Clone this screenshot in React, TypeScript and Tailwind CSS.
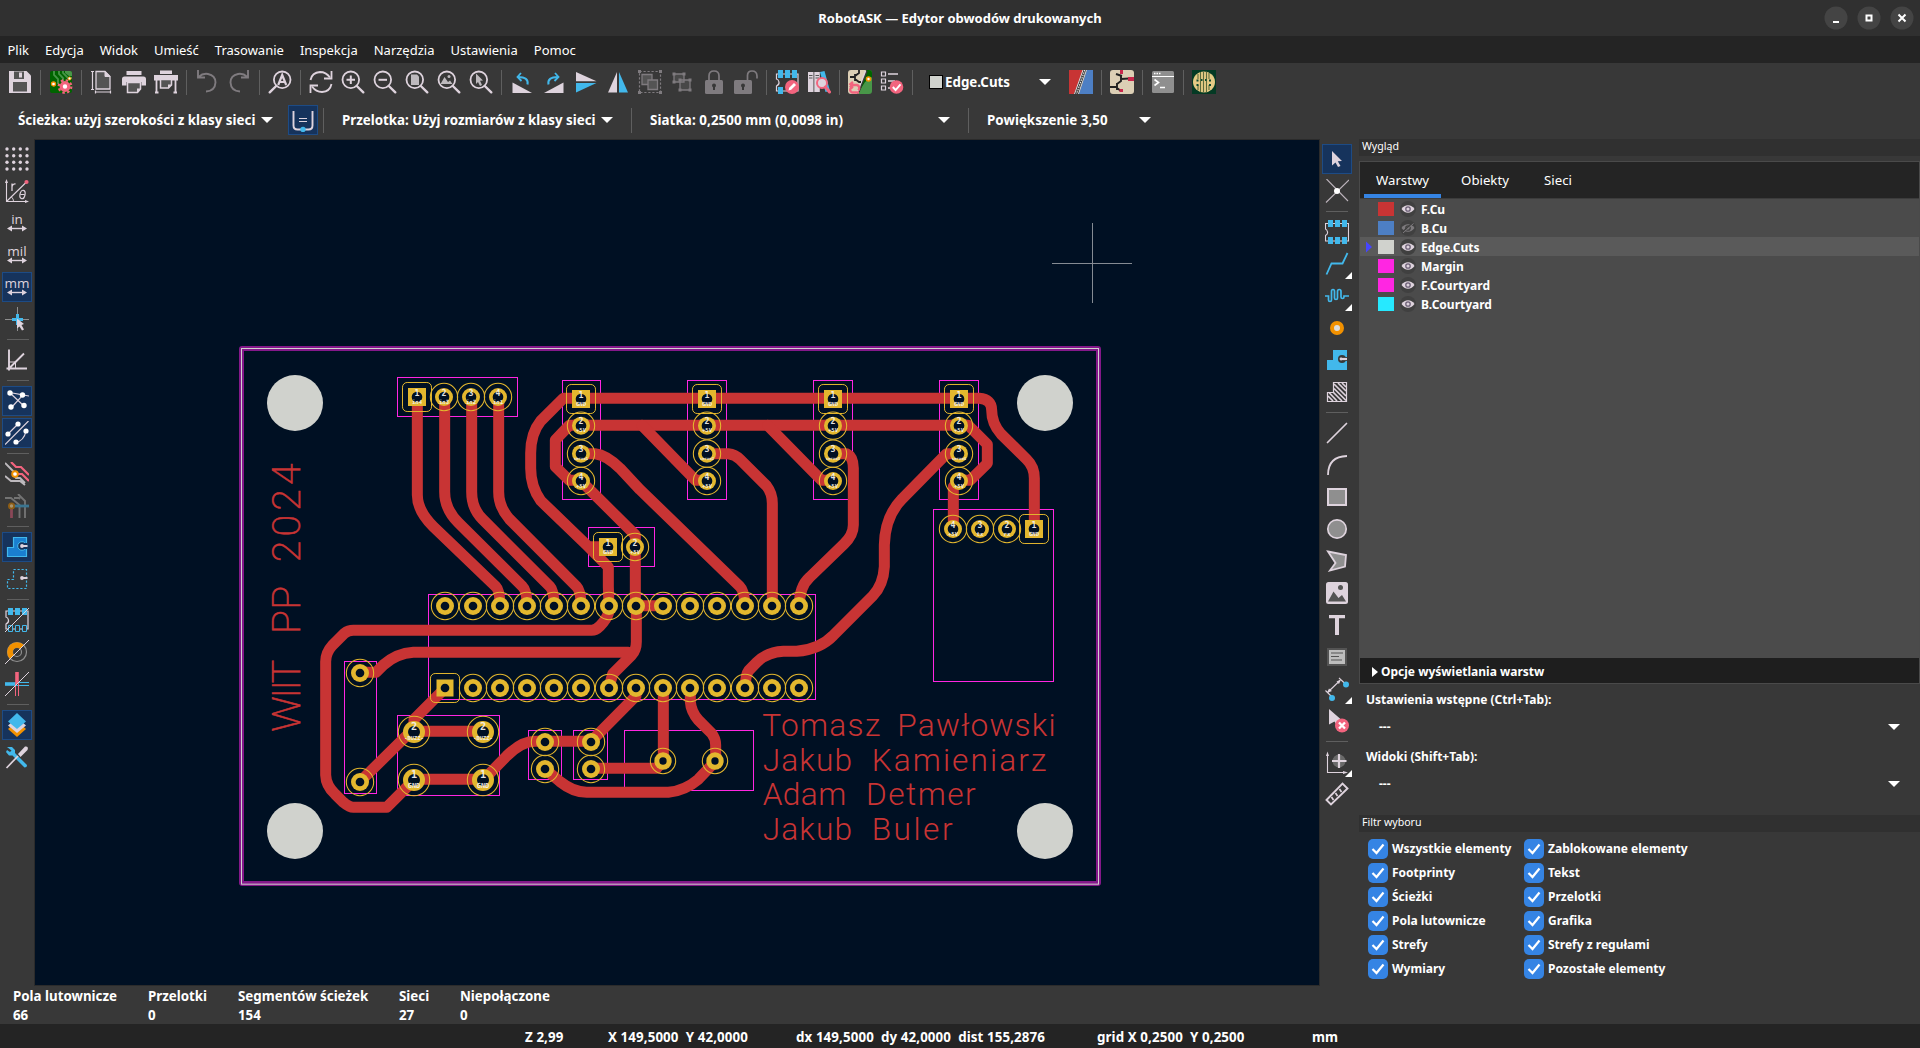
import React from 'react';

type Kids = { children?: React.ReactNode };

const L = '#ded3dd';
const B = '#42b8eb';
const P = '#f2647e';
const O = '#f29100';
const G = '#7f7b7f';

function Icon({ children }: Kids) {
  return (
    <svg viewBox="0 0 24 24" className="h-6 w-6 shrink-0" fill="none">
      {children}
    </svg>
  );
}

/* ---------- top toolbar icons ---------- */

const Lens = ({ children, flip }: Kids & { flip?: boolean }) => (
  <Icon>
    <g transform={flip ? 'matrix(-1 0 0 1 24 0)' : undefined}>
      <circle cx="9.8" cy="9.8" r="8.3" stroke={L} strokeWidth="1.8" />
      <path d="M15.8 16L22.3 22.3" stroke={L} strokeWidth="2.4" strokeLinecap="round" />
    </g>
    {children}
  </Icon>
);

const Save = () => (
  <Icon>
    <path d="M1 1H18.5L23 5.500V23H1Z" fill={L} />
    <path d="M6 1.500H16V9H6Z" fill="#545454" />
    <path d="M11 2.500H14V7.500H11Z" fill={L} />
    <path d="M5 12H19V21.500H5Z" fill="#545454" />
  </Icon>
);
const BoardSetup = () => (
  <Icon>
    <rect x="1" y="1" width="22" height="22" rx="2" fill="#006400" />
    <path d="M5 1L5 5L9 9V14M10 1V4L14 8V12M14 1V3L19 8H23" stroke="#489648" strokeWidth="1.8" />
    <path d="M16 1H21Q23 1 23 3V6H20L16 3Z" fill="#489648" />
    <circle cx="4.500" cy="14" r="2" fill="#fff" stroke={O} strokeWidth="1.300" />
    <circle cx="20.500" cy="8.500" r="1.500" fill="#fff" stroke={O} />
    <circle cx="16" cy="16.500" r="6.300" fill="none" stroke={P} strokeWidth="2.200" strokeDasharray="2.470 2.470" />
    <circle cx="16" cy="16.500" r="3.800" fill="#fff" stroke={P} strokeWidth="3.200" />
  </Icon>
);
const PageIcon = () => (
  <Icon>
    <path d="M6 1.500H15L20 6.500V19H6Z" fill="#545454" stroke={L} strokeWidth="1.300" />
    <path d="M15 1.500V6.500H20Z" fill={L} stroke={L} />
    <path d="M2.500 1V20M1 1.500H4M1 19.500H4M5 22H21M5.500 20.500V23.500M20.500 20.500V23.500" stroke={L} strokeWidth="1.200" />
  </Icon>
);
const Print = () => (
  <Icon>
    <path d="M4.500 1H19.500V5H4.500Z" fill={L} />
    <path d="M2.500 6.500H21.500Q24 6.500 24 9V15.500H19.500V12H4.500V15.500H0V9Q0 6.500 2.500 6.500Z" fill={L} />
    <path d="M5.500 12.500H18.500V19L15.500 22.500H5.500Z" fill="#545454" stroke={L} strokeWidth="1.500" />
    <path d="M15 23V18.500H19Z" fill={L} />
  </Icon>
);
const Plot = () => (
  <Icon>
    <path d="M6 .500H18V4H6Z" fill={L} />
    <path d="M0 5H24V10.500H0Z" fill={L} />
    <path d="M2.500 10V22M21.500 10V22M1 22.500H4.500M19.500 22.500H23" stroke={L} strokeWidth="1.800" />
    <path d="M6.500 9.500H17.500V15L14.500 18H6.500Z" fill="#545454" stroke={L} strokeWidth="1.500" />
    <path d="M14 18.500V14.500H18Z" fill={L} />
  </Icon>
);
const Undo = () => (
  <Icon>
    <path d="M3 0V7.500H10M3.500 7Q8 3 13 4Q20.500 5.500 20.500 12.500Q20 21 11 21.500" stroke={G} strokeWidth="1.900" />
  </Icon>
);
const Redo = () => (
  <Icon>
    <path d="M21 0V7.500H14M20.500 7Q16 3 11 4Q3.500 5.500 3.500 12.500Q4 21 13 21.500" stroke={G} strokeWidth="1.900" />
  </Icon>
);
const Refresh = () => (
  <Icon>
    <path d="M1.500 10Q3 2.500 11 2Q17 2 21 7.500M22.500 14Q21 21.500 13 22Q7 22 3 16.500" stroke={L} strokeWidth="1.800" />
    <path d="M22.500 1V8.500H15M1.500 23V15.500H9" stroke={L} strokeWidth="1.800" />
  </Icon>
);
const RotL = () => (
  <Icon>
    <path d="M2.500 12.500L22 23H2.500Z" fill={L} />
    <path d="M17.500 14.500Q19 7 8 7" stroke={B} strokeWidth="2" />
    <path d="M11 3L7.500 7L11.500 11" stroke={B} strokeWidth="1.800" />
  </Icon>
);
const RotR = () => (
  <Icon>
    <path d="M21.500 12.500L2 23H21.500Z" fill={L} />
    <path d="M6.500 14.500Q5 7 16 7" stroke={B} strokeWidth="2" />
    <path d="M13 3L16.500 7L12.500 11" stroke={B} strokeWidth="1.800" />
  </Icon>
);
const FlipV = () => (
  <Icon>
    <path d="M2 2L22.500 11.300H2Z" fill={L} />
    <path d="M2 22.500V13L22.500 13Z" fill={B} />
  </Icon>
);
const FlipH = () => (
  <Icon>
    <path d="M11 2V22.500H2Z" fill={L} />
    <path d="M13 2V22.500H22Z" fill={B} />
  </Icon>
);
const Group = () => (
  <Icon>
    <path d="M1.500 1.500H22.500V22.500H1.500Z" stroke={G} strokeWidth="1.200" strokeDasharray="2.200 1.800" />
    <path d="M0 0H3V3H0ZM21 0H24V3H21ZM0 21H3V24H0ZM21 21H24V24H21Z" fill={G} />
    <path d="M4 4.500H14V14.500H4Z" fill="#545454" stroke={G} strokeWidth="1.300" />
    <path d="M10 10H19.500V19.500H10Z" fill="#545454" stroke={G} strokeWidth="1.300" />
  </Icon>
);
const Ungroup = () => (
  <Icon>
    <path d="M4 4H14V12H4ZM10 10H20V20H10Z" fill="#484848" stroke={G} strokeWidth="1.300" />
    <path d="M2.500 2.500H5.500V5.500H2.500ZM12.500 2.500H15.500V5.500H12.500ZM2.500 10.500H5.500V13.500H2.500ZM8.500 8.500H11.500V11.500H8.500ZM18.500 8.500H21.500V11.500H18.500ZM8.500 18.500H11.500V21.500H8.500ZM18.500 18.500H21.500V21.500H18.500Z" fill={G} />
  </Icon>
);
const Lock = ({ open }: { open?: boolean }) => (
  <Icon>
    {open ? (
      <path d="M13.500 11V5.500Q13.500 1 18 1Q22.800 1 23 6V8.500" stroke={G} strokeWidth="1.700" />
    ) : (
      <path d="M7 11V6Q7 1 12 1Q17 1 17 6V11" stroke={G} strokeWidth="1.700" />
    )}
    <rect x={open ? 0 : 3} y="10" width="18" height="14" rx="1.500" fill={G} />
    <path d={open ? 'M9 14V20' : 'M12 14V20'} stroke="#383838" strokeWidth="2" />
    <circle cx={open ? 9 : 12} cy="15.500" r="2" fill="#383838" />
  </Icon>
);
const FootEd = () => (
  <Icon>
    <path d="M1.500 4H23V21H1.500V16Q4.500 14.500 4 12Q3.500 9.500 1.500 9Z" stroke={L} strokeWidth="1.200" />
    <path d="M3 0H8V8H3ZM10 0H15V8H10ZM17 0H22V8H17ZM3 17H8V24H3Z" fill={B} />
    <circle cx="17" cy="17" r="7" fill={P} />
    <path d="M13.500 20.500L14.200 17.800L19 13L21 15L16.200 19.800Z" fill="#fff" />
  </Icon>
);
const Library = () => (
  <Icon>
    <path d="M1 2H6.500V22H1ZM7.300 2H12.800V22H7.300Z" fill={L} />
    <path d="M13 2L17.500 1L23 21L18.500 22Z" fill={B} />
    <path d="M2 5.500H5.500M2 8H5.500M8.500 5.500H12M8.500 8H12" stroke="#545454" />
    <circle cx="15" cy="13" r="5" fill={L} stroke={P} strokeWidth="2" />
    <path d="M18.500 17L22.500 22" stroke={P} strokeWidth="3" strokeLinecap="round" />
  </Icon>
);
const UpdatePcb = () => (
  <Icon>
    <path d="M3 0H18L9 24H3Q0 24 0 21V3Q0 0 3 0Z" fill="#dccfb5" />
    <path d="M19 0H21Q24 0 24 3V21Q24 24 21 24H10Z" fill="#489648" />
    <path d="M19 0H21Q24 0 24 3V7L17 12L12 20H11Z" fill="#006400" />
    <path d="M19 1L11 22" stroke="#383838" strokeWidth="1.300" />
    <path d="M17.500 1L9 23" stroke={L} strokeWidth="1.500" />
    <path d="M2 7H7M7 4V11M7 6L11 3V0M7 9L11 12H13" stroke="#222" strokeWidth="1.800" />
    <circle cx="20.500" cy="9" r="2" fill="#fff" stroke={O} strokeWidth="1.600" />
    <path d="M1.500 15H9Q12.500 16 10.500 20.500M1.500 15L5 12M1.500 15L5 18M11 22.500L4 22.500Q1 21 3 17.500" stroke={P} strokeWidth="2.400" />
  </Icon>
);
const Drc = () => (
  <Icon>
    <path d="M1.500 2H5.500V6H1.500ZM1.500 9H5.500V13H1.500ZM1.500 16H5.500V20H1.500Z" stroke={L} strokeWidth="1.200" />
    <path d="M8 4H18M8 11H15M8 18H10" stroke={L} strokeWidth="1.500" />
    <circle cx="16.500" cy="17" r="6.800" fill={P} />
    <path d="M12.800 17L15.600 20L20.500 14.300" stroke="#fff" strokeWidth="1.900" />
  </Icon>
);
const LayerPair = () => (
  <Icon>
    <path d="M0 0H14L5 24H0Z" fill="#c83434" />
    <path d="M18 0H24V24H10Z" fill="#4d7fc4" />
    <path d="M14 0L5.500 24M17.500 0L9.500 24" stroke="#eee" strokeWidth=".900" />
    <path d="M15.800 0L7.500 24" stroke="#eee" strokeWidth="1.100" strokeDasharray="1.500 1" />
  </Icon>
);
const Schematic = () => (
  <Icon>
    <rect width="24" height="24" rx="3" fill="#dccfb5" />
    <path d="M0 17H7M7 13V20M7 14L11 11V5M7 18L11 21M6 4L12 6M11 9L19 8.500" stroke="#222" strokeWidth="1.900" />
    <path d="M10 0H13V4H10ZM18 7H24V11H18ZM9.500 19H13V22H9.500Z" fill="#c8284c" />
  </Icon>
);
const Terminal = () => (
  <Icon>
    <rect x="1" y="1" width="22" height="22" rx="1.500" fill="#8f8f8f" />
    <path d="M1 6.500H23" stroke="#fff" />
    <path d="M3 3.500H4.500M5.500 3.500H7M8 3.500H9.500" stroke="#fff" strokeWidth="1.500" />
    <path d="M3.500 9.500L7.500 12.500L3.500 15.500M9 17.500H14" stroke="#fff" strokeWidth="1.600" />
  </Icon>
);
const Chip = () => (
  <Icon>
    <rect width="24" height="24" fill="#043a24" />
    <ellipse cx="12" cy="12" rx="11" ry="10.500" fill="#e5cb85" />
    <path d="M8.500 2V22M11.500 1.500V22.500M14.500 1.500V22.500M17 3V9M6 4V9M6 15V20M17 15V20" stroke="#5b6b3c" strokeWidth="1.100" />
    <path d="M4.500 9.500H6.500V11.500H4.500ZM4.500 14H6.500V16H4.500ZM17 9.500H19V11.500H17ZM17 14H19V16H17ZM9 9H10.500V11H9ZM13 9H14.500V11H13Z" fill="#0d4a30" />
  </Icon>
);

/* ---------- left toolbar icons ---------- */

const GridDots = () => (
  <Icon>
    {[2, 8.700, 15.300, 22].map((y) =>
      [2, 8.700, 15.300, 22].map((x) => <circle key={`${x}-${y}`} cx={x} cy={y} r="1.700" fill={L} />)
    )}
  </Icon>
);
const Polar = () => (
  <Icon>
    <path d="M1.500 2V22.500H22M1.500 22.500L21 3.500" stroke={L} strokeWidth="1.100" />
    <path d="M1.500 0L3 4H0ZM24 22.500L20 21V24Z" fill={L} />
    <circle cx="21.500" cy="3" r="2.100" fill={P} />
    <path d="M6.500 18Q8.500 20 8.500 22" stroke={L} strokeWidth=".900" />
    <path d="M7 4.500V12M7 7.500Q8 4.500 10.500 5" stroke={L} strokeWidth="1.300" />
    <ellipse cx="17.500" cy="15.500" rx="2.500" ry="4.300" transform="rotate(12 17.500 15.500)" stroke={L} strokeWidth="1.200" />
    <path d="M15.300 15.500H19.700" stroke={L} />
  </Icon>
);
const Unit = ({ label }: { label: string }) => (
  <div className="flex h-6 w-6 flex-col items-center">
    <span className="h-[14px] font-['Open_Sans'] text-[13.500px] leading-[16px] font-medium text-[#ded3dd]">{label}</span>
    <svg viewBox="0 0 24 7" className="h-[7px] w-6 shrink-0">
      <path d="M2 3.500L7 .500V6.500ZM22 3.500L17 .500V6.500Z" fill={L} />
      <path d="M5 3.500H19" stroke={L} strokeWidth="1.400" />
    </svg>
  </div>
);
const CursorCross = () => (
  <Icon>
    <path d="M0 12.500H24M12.500 0V24" stroke="#8f8f8f" strokeWidth="1" />
    <path d="M11 7H14V11H18V14H14V18H11V14H7V11H11Z" fill={B} />
    <path d="M12 11.500L19 17L16.500 18L19 22.500L17 23.500L14.500 19.500L12 21.500Z" fill={L} />
  </Icon>
);
const Angle = () => (
  <Icon>
    <path d="M4 1.500V22.500M1.500 20.500H22M4 20.500L19 5.500" stroke={L} strokeWidth="1.900" />
    <path d="M4 14H10.500V20" stroke={L} />
  </Icon>
);
const Ratsnest = () => (
  <Icon>
    <path d="M4.500 3.500L18 6L6 19M4.500 3.500L19 17M18 6L24 7" stroke={L} strokeWidth="1.200" />
    <g fill="#fff">
      <circle cx="5" cy="4" r="2.700" />
      <circle cx="17.500" cy="6" r="2.700" />
      <circle cx="6" cy="18" r="2.700" />
      <circle cx="19" cy="16.500" r="2.700" />
    </g>
  </Icon>
);
const CurvedRats = () => (
  <Icon>
    <path d="M0 23.500L23.500 0M3 13L13 3M10.500 21.500Q19 20 21 10" stroke={L} strokeWidth="1.200" />
    <g fill="#fff">
      <circle cx="3" cy="13" r="2.600" />
      <circle cx="13" cy="3" r="2.600" />
      <circle cx="11" cy="21" r="2.600" />
      <circle cx="21" cy="10" r="2.600" />
    </g>
  </Icon>
);
const HighCurrent = () => (
  <Icon>
    <path d="M0 1L8 9V12L11 16H15L20 21M0 14L6 19H15L20 23" stroke="#bdb9bd" strokeWidth="1.900" />
    <path d="M6 0L11 5H16L24 13M13 12H17L24 19" stroke={P} strokeWidth="2.200" />
    <circle cx="10" cy="12" r="2.800" fill="#fff" stroke={O} strokeWidth="1.900" />
  </Icon>
);
const DimNets = () => (
  <Icon>
    <path d="M0 4H6L14.500 11V24M9 4H14L15 5M13 0L20 7V24" stroke="#737373" strokeWidth="1.900" />
    <path d="M6.500 12V24" stroke="#8a4857" strokeWidth="2.800" />
    <path d="M7 12H24" stroke="#3b7590" strokeWidth="2.800" />
    <circle cx="6.500" cy="12" r="2.600" fill="#a9956f" stroke="#8e5d14" strokeWidth="1.800" />
  </Icon>
);
const ZoneSolid = ({ outline }: { outline?: boolean }) => (
  <Icon>
    {outline ? (
      <path d="M8.500 2.500H21.500V21.500H2.500V12.500H8.500Z" stroke={B} strokeWidth="1.200" strokeDasharray="2.200 1.800" />
    ) : (
      <path d="M8.500 2.500H21.500V21.500H2.500V12.500H8.500Z" fill="#1a7fd0" stroke={B} strokeWidth="1.200" />
    )}
    {!outline && <circle cx="17" cy="11" r="4.300" fill="#16335c" stroke={B} />}
    {!outline && <path d="M17 8H22V14H17Z" fill="#16335c" />}
    <circle cx="17" cy="11" r="1.900" fill={L} />
    <path d="M17 11H22.500" stroke={L} strokeWidth="2" />
  </Icon>
);
const PadSketch = () => (
  <Icon>
    <path d="M1 3H23V21H1V16Q4 14.500 3.500 12Q3 9.500 1 9Z" stroke={L} strokeWidth="1.200" />
    <path d="M3 0H8V7H3ZM10 0H15V7H10ZM17 0H22V7H17Z" fill={B} />
    <path d="M3.500 17.500H7.500V23.500H3.500ZM10.500 17.500H14.500V23.500H10.500ZM17.500 17.500H21.500V23.500H17.500Z" fill="#383838" stroke={B} />
    <path d="M0 24L24 0" stroke={L} />
  </Icon>
);
const ViaSketch = () => (
  <Icon>
    <circle cx="12" cy="12" r="9.500" stroke="#8f8f8f" strokeWidth="1.200" />
    <circle cx="12" cy="12" r="4.500" stroke="#8f8f8f" strokeWidth="1.200" />
    <path d="M5 19A9.900 9.900 0 0 1 19 5L15 9A4.200 4.200 0 0 0 9 15Z" fill={O} />
    <path d="M0 24L24 0" stroke={L} />
  </Icon>
);
const TrackSketch = () => (
  <Icon>
    <path d="M0 12H12" stroke={B} strokeWidth="3.600" />
    <path d="M12 10.500H24M12 13.500H24" stroke={B} />
    <path d="M12 0V12" stroke={P} strokeWidth="3.600" />
    <path d="M10.500 12V24M13.500 12V24" stroke={P} />
    <path d="M0 24L24 0" stroke={L} />
  </Icon>
);
const Layers = () => (
  <Icon>
    <path d="M12 8L21 16L12 24L3 16Z" fill={O} />
    <path d="M12 4.500L21 12.500L12 20L3 12.500Z" fill={L} />
    <path d="M12 0L21 8.500L12 16L3 8.500Z" fill={B} />
  </Icon>
);
const Tools = () => (
  <Icon>
    <path d="M2 2L7 2L10 5V8L22 20Q22 22.500 19.500 22.500L7.500 10.500H4L1 7L2 5L5 7L6.500 5.500Z" fill={B} />
    <path d="M1.500 23L13 11" stroke={L} strokeWidth="1.700" />
    <path d="M13 9L20 1.500Q24 1 22.500 5L15.500 12Z" fill={L} />
  </Icon>
);

/* ---------- right toolbar icons ---------- */

const Arrow = () => (
  <Icon>
    <path d="M7 4L17 14L12.800 14.300L15.500 19L13 20L10.500 15.500L7 18.500Z" fill={L} />
  </Icon>
);
const LocalRats = () => (
  <Icon>
    <path d="M1.500 0L23 22M24 1L1 23.500" stroke="#bdb4bc" strokeWidth="1.100" />
    <circle cx="12" cy="12" r="3" fill="#fff" />
  </Icon>
);
const Footprint = () => (
  <Icon>
    <path d="M.500 3.500H23.500V21H.500V15.500Q3 14 2.500 12Q2 9.500 .500 9Z" stroke={L} strokeWidth="1.100" />
    <path d="M3 0H8V7H3ZM10 0H15V7H10ZM17 0H22V7H17ZM3 17H8V24H3ZM10 17H15V24H10ZM17 17H22V24H17Z" fill={B} />
  </Icon>
);
const Route = () => (
  <Icon>
    <path d="M1.500 22.500L6.500 11.500H17.500L22.500 1" stroke={B} strokeWidth="1.800" />
  </Icon>
);
const Tune = () => (
  <Icon>
    <path d="M0 12H3.500V16Q3.500 17.500 5 17.500Q6.500 17.500 6.500 16V7.500Q6.500 5.500 8 5.500Q9.500 5.500 9.500 7.500V14Q9.500 15.500 11 15.500Q12.500 15.500 12.500 14V7.500Q12.500 5.500 14.300 5.500Q16 5.500 16 7.500V13Q16 14.500 17.500 14.500Q19 14.500 19 13V12H24" stroke={B} strokeWidth="1.700" />
  </Icon>
);
const Via = () => (
  <Icon>
    <circle cx="12" cy="12" r="5" fill="#dedede" stroke={O} strokeWidth="4" />
  </Icon>
);
const ZoneAdd = () => (
  <Icon>
    <path d="M8 2H22V22H2V12H8Z" fill={B} />
    <circle cx="17" cy="11" r="4" fill="#383838" />
    <path d="M18 9H22.500V13H18Z" fill="#383838" />
    <path d="M16 11H22" stroke={L} strokeWidth="2.200" />
    <circle cx="16" cy="11" r="1.400" fill={L} />
  </Icon>
);
const RuleArea = () => (
  <Icon>
    <path d="M8.500 2.500H21.500V21.500H2.500V12.500H8.500Z" stroke={L} strokeWidth="1.200" />
    <path d="M9 4L21 16M13 3L21 11M17 3L21 7M9 8.500L21 20.500M8 12L17 21M4 12.500L12 21M3 16L8 21" stroke={L} strokeWidth="1.700" />
  </Icon>
);
const LineIcon = () => (
  <Icon>
    <path d="M2.500 21.500L21.500 2.500" stroke={L} strokeWidth="1.700" strokeLinecap="round" />
  </Icon>
);
const ArcIcon = () => (
  <Icon>
    <path d="M3 22Q3 3.500 22 3" stroke={L} strokeWidth="1.800" />
  </Icon>
);
const RectIcon = () => (
  <Icon>
    <path d="M3 4H21V20H3Z" fill="#8f8f8f" stroke={L} strokeWidth="2" />
  </Icon>
);
const CircleIcon = () => (
  <Icon>
    <circle cx="12" cy="12" r="9.200" fill="#8f8f8f" stroke={L} strokeWidth="1.700" />
  </Icon>
);
const PolyIcon = () => (
  <Icon>
    <path d="M3 2.500L21 6L20 17.500L5 21.500L10.500 14Z" fill="#8f8f8f" stroke={L} strokeWidth="1.800" />
  </Icon>
);
const ImageIcon = () => (
  <Icon>
    <rect x="1" y="1" width="22" height="22" rx="2.500" fill={L} />
    <circle cx="15.500" cy="6.500" r="2.500" fill="#545454" />
    <path d="M3 20.500L8.500 10.500L13.500 17L17 14L21 20.500Z" fill="#545454" />
  </Icon>
);
const TextIcon = () => (
  <Icon>
    <path d="M4 2H20V5.200H14V22H10V5.200H4Z" fill={L} />
  </Icon>
);
const TextBox = () => (
  <Icon>
    <path d="M3 4H21V20H3Z" fill="#bdbdbd" stroke="#545454" strokeWidth="2" />
    <path d="M6 8H18M6 11.500H14M6 15H17" stroke="#545454" strokeWidth="1.200" />
  </Icon>
);
const Dimension = () => (
  <Icon>
    <path d="M3 15L15 3.500M.500 13.500L7 20M14 1L21 7.500" stroke={L} strokeWidth="1.100" />
    <path d="M2 16L7 14L4 11.500ZM16 2.500L11.500 4.500L14 7Z" fill={L} />
    <circle cx="21" cy="7.500" r="3" fill={B} />
    <circle cx="7" cy="21" r="3" fill={B} />
  </Icon>
);
const DeleteIcon = () => (
  <Icon>
    <path d="M4 0L15.500 10L12 17L9.500 12.500L4 15.500Z" fill={L} />
    <circle cx="17" cy="16.500" r="7" fill={P} />
    <path d="M14 13.500L20 19.500M20 13.500L14 19.500" stroke="#fff" strokeWidth="2.300" />
  </Icon>
);
const GridOrigin = () => (
  <Icon>
    <path d="M2.500 4V22.500H20" stroke={L} strokeWidth="1.100" />
    <path d="M2.500 1.500L4 6H1ZM23 22.500L18 21V24Z" fill={L} />
    <circle cx="14" cy="11" r="6.500" fill="#6a6a6a" />
    <path d="M14 4V18M7 11H21.500" stroke={L} strokeWidth="2.200" />
  </Icon>
);
const Measure = () => (
  <Icon>
    <path d="M1.500 18L17.500 1.500L22.500 6.500L6 22.500Z" stroke={L} strokeWidth="1.900" />
    <path d="M8.500 18L6.500 15M12.500 14L10.500 11M16.500 10L14.500 7" stroke={L} strokeWidth="1.700" />
  </Icon>
);

/* ---------- building blocks ---------- */

const VSep = () => (
  <div className="flex w-[9px] shrink-0 justify-center">
    <div className="h-[25px] w-px bg-[#5f5f5f]" />
  </div>
);
const HSep = () => (
  <div className="flex h-[9px] shrink-0 items-center justify-center">
    <div className="h-px w-[22px] bg-[#5f5f5f]" />
  </div>
);
const Cell = ({ children, active, more }: Kids & { active?: boolean; more?: boolean }) => (
  <div className="relative flex size-8 shrink-0 items-center justify-center">
    <div
      className={
        active
          ? 'flex size-[30px] items-center justify-center border border-[#1d4b85] bg-[#16335c]'
          : 'flex size-[30px] items-center justify-center'
      }
    >
      {children}
    </div>
    {more && (
      <svg viewBox="0 0 7 7" className="absolute right-px bottom-px size-[7px]">
        <path d="M7 0V7H0Z" fill="#fff" />
      </svg>
    )}
  </div>
);
const Down = () => (
  <svg viewBox="0 0 12 6" className="h-1.5 w-3 shrink-0">
    <path d="M0 0H12L6 6Z" fill="#fff" />
  </svg>
);

/* ---------- board ---------- */

type Pad = { x: number; y: number; sq?: boolean; r?: number; hole?: number; ring?: number; n?: string; net?: string };

const cols = [1083, 1461, 1839, 2217];
const dip = [675, 759, 840, 921, 1002, 1083, 1167, 1248, 1329, 1410, 1491, 1575, 1656, 1737];

const pads: Pad[] = [
  ...[['1', 'in4'], ['2', 'in3'], ['3', 'in2'], ['4', 'in1']].map(([n, net], i) => ({
    x: [591, 672, 753, 834][i], y: 171, sq: i === 0, hole: 16, n, net,
  })),
  ...cols.flatMap((x, c) => [
    { x, y: 177, sq: true, hole: 16, n: '1', net: 'GND' },
    { x, y: 257, hole: 16, n: '2', net: '+5V' },
    { x, y: 341, hole: 16, n: '3', net: ['servo1', 'servo2', 'servo3', 'servo4'][c] },
    { x, y: 423, hole: 16, n: '4', net: '+5V' },
  ]),
  { x: 1164, y: 621, sq: true, hole: 16, n: '1', net: 'GND' },
  { x: 1245, y: 621, hole: 16, n: '2', net: '+5V' },
  { x: 2199, y: 567, hole: 16, n: '4', net: '+5V' },
  { x: 2280, y: 567, hole: 16, n: '3', net: 'tx' },
  { x: 2361, y: 567, hole: 16, n: '2', net: 'rx' },
  { x: 2442, y: 567, sq: true, hole: 16, n: '1', net: 'GND' },
  ...dip.map((x) => ({ x, y: 798 })),
  ...dip.map((x, i) => ({ x, y: 1044, sq: i === 0, r: i === 0 ? 25.5 : 27 })),
  { x: 420, y: 999 },
  { x: 420, y: 1326 },
  { x: 582, y: 1176, r: 33, hole: 18, ring: 47, n: '2', net: '-BUZZ-' },
  { x: 789, y: 1176, r: 33, hole: 18, ring: 47, n: '2', net: '-BUZZ-' },
  { x: 582, y: 1320, r: 33, hole: 18, ring: 47, n: '1', net: 'GND' },
  { x: 789, y: 1320, r: 33, hole: 18, ring: 47, n: '1', net: 'GND' },
  { x: 975, y: 1206 },
  { x: 975, y: 1287 },
  { x: 1113, y: 1206 },
  { x: 1113, y: 1287 },
  { x: 1329, y: 1263, r: 26, hole: 11, ring: 38 },
  { x: 1485, y: 1263, r: 26, hole: 11, ring: 38 },
];

const tracks = [
  'M592 171V465Q592 512 640 560L828 740Q840 752 840 798',
  'M674 171V455Q674 507 715 548L908 740Q921 752 921 798',
  'M755 171V455Q755 505 787 537L990 740Q1002 752 1002 798',
  'M836 171V455Q836 500 868 537L1070 740Q1083 753 1083 798',
  'M1083 175H1030L962 243Q932 280 932 340V385Q932 440 962 482L1105 620H1163M1105 620L1165 681V740L1167 798',
  'M1083 175H2278Q2315 178 2315 210Q2315 250 2343 282L2420 358Q2443 380 2443 415V565',
  'M1083 256H2217M1083 256H1048L1006 300V380L1048 421H1083',
  'M2217 256H2245L2302 313V370L2250 421H2217',
  'M1266 256L1427 421H1461M1643 256L1805 421H1839',
  'M1083 341H1125Q1160 345 1200 385L1260 449L1560 740Q1573 752 1575 798',
  'M1461 341H1525Q1545 343 1560 358L1640 438Q1657 460 1657 490V798',
  'M1839 341H1880Q1900 350 1900 385V555Q1900 585 1872 612L1768 713Q1738 740 1738 798',
  'M2217 341H2180L2045 478Q1995 530 1993 615V680Q1990 735 1958 768L1840 886Q1800 928 1730 934H1690Q1640 937 1610 967L1586 992Q1576 1005 1576 1043',
  'M2217 423L2200 440V565',
  'M1083 423L1246 585V798L1249 800V905Q1249 930 1235 945L1178 1002L1167 1043',
  'M1225 937H580Q530 940 490 975L468 997H420',
  'M1246 797H1329',
  'M1167 798V815Q1160 838 1140 858Q1127 871 1115 871H400Q385 871 373 880L337 916Q317 938 317 965V1305Q318 1337 345 1362L370 1387Q388 1402 400 1402H500L582 1320',
  'M420 1325L582 1165M582 1174V1138L677 1043M582 1174H790M582 1318H790',
  'M790 1320L860 1248Q905 1204 945 1204H1113L1248 1068V1043',
  'M975 1287L1020 1325Q1060 1357 1100 1357H1345Q1395 1352 1435 1318L1485 1265',
  'M1113 1285H1310L1329 1263M1330 1043V1263',
  'M1411 1043V1085Q1413 1115 1435 1140L1475 1180Q1487 1195 1487 1215V1263',
];

const yards = [
  [532, 112, 893, 230],
  [1027, 121, 1142, 479],
  [1402, 121, 1520, 479],
  [1780, 121, 1898, 479],
  [2158, 121, 2276, 479],
  [1105, 562, 1304, 680],
  [626, 763, 1787, 1078],
  [374, 964, 470, 1361],
  [532, 1126, 839, 1367],
  [926, 1171, 1025, 1319],
  [1060, 1171, 1162, 1319],
  [1213, 1171, 1601, 1351],
  [2140, 508, 2501, 1025],
];

/* centre of the screen pixel that holds a board coordinate */
const snap = (v: number) => Math.floor(v / 3) * 3 + 1.5;

const words: [string, number, number, number][] = [
  ['Tomasz', 1627, 354, 1188],
  ['Pawłowski', 2032, 475, 1188],
  ['Jakub', 1628, 268, 1293],
  ['Kamieniarz', 1955, 524, 1293],
  ['Adam', 1628, 251, 1395],
  ['Detmer', 1938, 329, 1395],
  ['Jakub', 1628, 268, 1499],
  ['Buler', 1955, 243, 1499],
];

const sideWords: [string, number, number][] = [
  ['WIIT', 0, 216],
  ['PP', 293, 144],
  ['2024', 508, 297],
];

function PadShape({ p }: { p: Pad }) {
  const r = p.r ?? 27;
  const hole = p.hole ?? 13;
  const ring = p.ring ?? 41;
  const big = r > 30;
  const long = (p.net ?? '').length > 3;
  return (
    <g>
      {p.sq ? (
        <>
          <rect x={p.x - 43.5} y={p.y - 43.5} width="87" height="87" rx="14" fill="none" stroke="#e3b72e" strokeWidth="3" />
          <rect x={p.x - r} y={p.y - r} width={r * 2} height={r * 2} fill="#e3b72e" />
        </>
      ) : (
        <>
          <circle cx={p.x} cy={p.y} r={ring} fill="none" stroke="#e3b72e" strokeWidth="3.200" />
          <circle cx={p.x} cy={p.y} r={r} fill="#e3b72e" />
        </>
      )}
      <circle cx={p.x} cy={p.y} r={hole} fill="#001023" />
      {p.n && (
        <g fill="#f4f1ec" fillOpacity=".95" fontWeight="700" textAnchor="middle" fontFamily="DejaVu Sans Mono">
          <text x={p.x} y={big ? p.y - 7 : p.y - 4} fontSize={big ? 31 : 25}>
            {p.n}
          </text>
          <text x={p.x} y={big ? p.y + 23 : p.y + 20} fontSize={long ? (big ? 16 : 12) : big ? 21 : 17}>
            {p.net}
          </text>
        </g>
      )}
    </g>
  );
}

function Board() {
  return (
    <svg viewBox="35 140 1284 845" className="h-[845px] w-[1284px]" fill="none">
      <g transform="translate(220 340) scale(.333333)">
        {yards.map(([a, b, c, d]) => (
          <rect
            key={`${a}-${b}`}
            x={snap(a)}
            y={snap(b)}
            width={snap(c) - snap(a)}
            height={snap(d) - snap(b)}
            stroke="#ff26e2"
            strokeWidth="3"
          />
        ))}
        <g stroke="#c83434" strokeWidth="33" strokeLinejoin="round" strokeLinecap="round">
          {tracks.map((d) => (
            <path key={d} d={d} />
          ))}
        </g>
        {pads.map((p, i) => (
          <PadShape key={i} p={p} />
        ))}
        <rect x="64.500" y="25.500" width="2571" height="1605" rx="2" stroke="#84188a" strokeWidth="15" />
        <rect x="64.500" y="25.500" width="2571" height="1607" stroke="#d0d2cd" strokeWidth="3" />
        {[225, 2475].map((x) => [189, 1473].map((y) => <circle key={`${x}-${y}`} cx={x} cy={y} r="84" fill="#d0d2cd" />))}
        <g fill="#c83434" fontFamily="Roboto" fontWeight="300">
          {words.map(([t, x, w, y]) => (
            <text key={`${t}-${y}`} x={x} y={y} fontSize="95" textLength={w} lengthAdjust="spacing">
              {t}
            </text>
          ))}
          <g transform="translate(240 1175) rotate(-90)" stroke="#c83434" strokeWidth="1.500">
            {sideWords.map(([t, x, w]) => (
              <text key={t} x={x} y="0" fontSize="118" fontWeight="200" textLength={w} lengthAdjust="spacing">
                {t}
              </text>
            ))}
          </g>
        </g>
      </g>
      <path d="M1052 263.500H1132M1092.500 223V303" stroke="#858b93" strokeWidth="1" />
    </svg>
  );
}

/* ---------- appearance panel ---------- */

const layers = [
  { name: 'F.Cu', color: 'bg-[#c83434]' },
  { name: 'B.Cu', color: 'bg-[#4d7fc4]', hidden: true },
  { name: 'Edge.Cuts', color: 'bg-[#d0d2cd]', current: true },
  { name: 'Margin', color: 'bg-[#ff26e2]' },
  { name: 'F.Courtyard', color: 'bg-[#ff26e2]' },
  { name: 'B.Courtyard', color: 'bg-[#26e9ff]' },
];

const Eye = ({ off }: { off?: boolean }) => (
  <svg viewBox="0 0 16 16" className="size-4" fill="none">
    <circle cx="8" cy="8" r="8" fill="#404040" />
    <path d="M1.500 8Q4 4.300 8 4.300Q12 4.300 14.500 8Q12 11.700 8 11.700Q4 11.700 1.500 8Z" fill={off ? '#7d7a7d' : L} />
    <circle cx="8" cy="8" r="2.200" fill={off ? '#7d7a7d' : L} stroke={off ? '#404040' : '#6b5f75'} strokeWidth="1.300" />
    {off && <path d="M2.500 12L12.500 3" stroke="#404040" strokeWidth="1.500" />}
    {off && <path d="M3 13L13.500 3.500" stroke="#7d7a7d" />}
  </svg>
);

const filters = [
  ['Wszystkie elementy', 'Zablokowane elementy'],
  ['Footprinty', 'Tekst'],
  ['Ścieżki', 'Przelotki'],
  ['Pola lutownicze', 'Grafika'],
  ['Strefy', 'Strefy z regułami'],
  ['Wymiary', 'Pozostałe elementy'],
];

const Check = ({ label }: { label: string }) => (
  <div className="flex h-6 items-center gap-1">
    <div className="flex size-5 items-center justify-center rounded-[5px] bg-[#3584e4]">
      <svg viewBox="0 0 14 14" className="size-3.5" fill="none">
        <path d="M1.500 7L5.500 11L12.500 2.500" stroke="#fff" strokeWidth="2.200" />
      </svg>
    </div>
    <span>{label}</span>
  </div>
);

const Choice = ({ label }: { label: string }) => (
  <>
    <div className="flex h-[18px] items-center pl-[7px]">{label}</div>
    <div className="flex h-[39px] items-center justify-between pr-5 pb-[3px] pl-5">
      <span>---</span>
      <Down />
    </div>
  </>
);

function Panel() {
  return (
    <div className="flex w-[561px] flex-col text-[12px] font-bold">
      <div className="flex h-[17px] items-center bg-[#303030] pb-0.5 pl-[3px] text-[10.6px] font-normal">Wygląd</div>
      <div className="mt-[5px] flex h-[523px] flex-col border border-[#4a4a4a] bg-[#4b4b4b]">
        <div className="flex h-[37px] shrink-0 items-stretch border-b border-[#3c3c3c] bg-[#242424] pl-1 text-[13.200px] font-normal">
          {['Warstwy', 'Obiekty', 'Sieci'].map((t, i) => (
            <div
              key={t}
              className={
                i === 0
                  ? 'flex w-[77px] items-center justify-center border-b-4 border-[#3584e4] pt-1.5'
                  : i === 1
                    ? 'flex w-[88px] items-center justify-center pt-0.5'
                    : 'flex w-[58px] items-center justify-center pt-0.5'
              }
            >
              {t}
            </div>
          ))}
        </div>
        <div className="flex grow flex-col">
          {layers.map((l) => (
            <div
              key={l.name}
              className={l.current ? 'flex h-[19px] items-center bg-[#5a5a5a] pl-1.5' : 'flex h-[19px] items-center pl-1.5'}
            >
              <svg viewBox="0 0 6 12" className="h-3 w-1.5">
                {l.current && <path d="M0 0.500L6 6L0 11.500Z" fill="#4646ff" />}
              </svg>
              <div className={`mr-1.5 ml-1.5 h-3.5 w-4 ${l.color}`} />
              <Eye off={l.hidden} />
              <span className="ml-[5px] pt-[3px] leading-4">{l.name}</span>
            </div>
          ))}
        </div>
        <div className="flex h-[25px] shrink-0 items-center gap-[3px] bg-[#1e1e1e] pt-0.5 pl-3">
          <svg viewBox="0 0 6 10" className="h-2.5 w-1.5">
            <path d="M0 0L6 5L0 10Z" fill="#fff" />
          </svg>
          Opcje wyświetlania warstw
        </div>
      </div>
      <div className="h-[131px] pt-[7px]">
        <Choice label="Ustawienia wstępne (Ctrl+Tab):" />
        <Choice label="Widoki (Shift+Tab):" />
      </div>
      <div className="flex h-[17px] items-center bg-[#303030] pb-0.5 pl-[3px] text-[10.6px] font-normal">Filtr wyboru</div>
      <div className="mt-[5px] grid grid-cols-[156px_1fr] pl-[9px]">
        {filters.flat().map((f) => (
          <Check key={f} label={f} />
        ))}
      </div>
    </div>
  );
}

const stats = [
  ['Pola lutownicze', '66', 'w-[135px]'],
  ['Przelotki', '0', 'w-[90px]'],
  ['Segmentów ścieżek', '154', 'w-[161px]'],
  ['Sieci', '27', 'w-[61px]'],
  ['Niepołączone', '0', 'w-[120px]'],
];

export default function App() {
  return (
    <div className="flex h-[1048px] w-[1920px] flex-col overflow-hidden bg-[#383838] font-['Noto_Sans',sans-serif] whitespace-pre text-white">
      {/* title bar */}
      <div className="grid h-9 shrink-0 grid-cols-[1fr_auto_1fr] items-center bg-[#303030]">
        <div />
        <div className="pt-px text-[13px] font-bold">RobotASK — Edytor obwodów drukowanych</div>
        <div className="flex justify-end gap-[9px] pr-[6px]">
          {['M9 16H15', 'M9.500 9.500H14.500V14.500H9.500Z', 'M8.500 8.500L15.500 15.500M15.500 8.500L8.500 15.500'].map((d) => (
            <svg key={d} viewBox="0 0 24 24" className="size-6" fill="none">
              <circle cx="12" cy="12" r="11.500" fill="#444" />
              <path d={d} stroke="#fff" strokeWidth="2" />
            </svg>
          ))}
        </div>
      </div>
      {/* menu */}
      <div className="flex h-[27px] shrink-0 items-center gap-4 bg-[#242424] pt-0.5 pl-[7.500px] text-[13px]">
        {['Plik', 'Edycja', 'Widok', 'Umieść', 'Trasowanie', 'Inspekcja', 'Narzędzia', 'Ustawienia', 'Pomoc'].map((m) => (
          <span key={m}>{m}</span>
        ))}
      </div>
      {/* main toolbar */}
      <div className="flex h-[38px] shrink-0 items-center pl-1 text-[13.330px] font-bold">
        <Cell><Save /></Cell>
        <VSep />
        <Cell><BoardSetup /></Cell>
        <VSep />
        <Cell><PageIcon /></Cell>
        <Cell><Print /></Cell>
        <Cell><Plot /></Cell>
        <VSep />
        <Cell><Undo /></Cell>
        <Cell><Redo /></Cell>
        <VSep />
        <Cell>
          <Lens flip>
            <path d="M10.200 15L14.200 5L18.200 15M11.500 12H17" stroke={L} strokeWidth="2.200" />
          </Lens>
        </Cell>
        <VSep />
        <Cell><Refresh /></Cell>
        <Cell><Lens><path d="M9.800 5.500V14M5.500 9.800H14" stroke={L} strokeWidth="2" /></Lens></Cell>
        <Cell><Lens><path d="M5.500 9.800H14" stroke={L} strokeWidth="2" /></Lens></Cell>
        <Cell><Lens><path d="M6 4.500H12L14 6.500V15H6Z" fill="#bdb9bd" /></Lens></Cell>
        <Cell>
          <Lens>
            <path d="M3.500 14L7.500 7L11 12L13 10.500L15.500 14Z" fill="#bdb9bd" />
            <circle cx="12" cy="6.500" r="1.500" fill="#bdb9bd" />
          </Lens>
        </Cell>
        <Cell><Lens><path d="M7 3.500L14 10.500L11 10.800L13 15L11 16L9 12L7 14Z" fill="#bdb9bd" /></Lens></Cell>
        <VSep />
        <Cell><RotL /></Cell>
        <Cell><RotR /></Cell>
        <Cell><FlipV /></Cell>
        <Cell><FlipH /></Cell>
        <Cell><Group /></Cell>
        <Cell><Ungroup /></Cell>
        <Cell><Lock /></Cell>
        <Cell><Lock open /></Cell>
        <VSep />
        <Cell><FootEd /></Cell>
        <Cell><Library /></Cell>
        <VSep />
        <Cell><UpdatePcb /></Cell>
        <Cell><Drc /></Cell>
        <VSep />
        <div className="flex w-[148px] items-center pr-3.5 pl-3">
          <div className="mr-0.5 size-3.5 border border-black bg-[#d0d2cd]" />
          <span className="grow pt-px">Edge.Cuts</span>
          <Down />
        </div>
        <Cell><LayerPair /></Cell>
        <VSep />
        <Cell><Schematic /></Cell>
        <VSep />
        <Cell><Terminal /></Cell>
        <VSep />
        <Cell><Chip /></Cell>
      </div>
      {/* options toolbar */}
      <div className="flex h-[38px] shrink-0 items-center text-[13.330px] font-bold">
        <div className="flex w-[287px] items-center justify-between pr-3.5 pl-[18px]">
          <span className="pt-px tracking-[0.02px]">Ścieżka: użyj szerokości z klasy sieci</span> <Down />
        </div>
        <Cell active>
          <Icon>
            <path d="M2.500 3V17.500Q2.500 21.500 6.500 21.500H17.500Q21.500 21.500 21.500 17.500V3" stroke={L} strokeWidth="1.900" />
            <path d="M8 10.500H16M8 13.500H16" stroke={L} strokeWidth="1" />
            <circle cx="12" cy="21.500" r="2.700" fill={B} />
          </Icon>
        </Cell>
        <VSep />
        <div className="flex w-[299px] items-center justify-between pr-[14px] pl-[14px]">
          <span className="pt-px">Przelotka: Użyj rozmiarów z klasy sieci</span> <Down />
        </div>
        <VSep />
        <div className="flex w-[328px] items-center justify-between pr-[14px] pl-[14px]">
          <span className="pt-px tracking-[0.09px]">Siatka: 0,2500 mm (0,0098 in)</span> <Down />
        </div>
        <VSep />
        <div className="flex w-[192px] items-center justify-between pr-[14px] pl-[14px]">
          <span className="pt-px tracking-[0.05px]">Powiększenie 3,50</span> <Down />
        </div>
      </div>
      {/* work area */}
      <div className="flex h-[847px] shrink-0">
        <div className="flex w-[34px] flex-col pt-1 pl-px">
          <Cell><GridDots /></Cell>
          <Cell><Polar /></Cell>
          <Cell><Unit label="in" /></Cell>
          <Cell><Unit label="mil" /></Cell>
          <Cell active><Unit label="mm" /></Cell>
          <Cell><CursorCross /></Cell>
          <HSep />
          <Cell><Angle /></Cell>
          <HSep />
          <Cell active><Ratsnest /></Cell>
          <Cell active><CurvedRats /></Cell>
          <HSep />
          <Cell><HighCurrent /></Cell>
          <Cell><DimNets /></Cell>
          <HSep />
          <Cell active><ZoneSolid /></Cell>
          <Cell><ZoneSolid outline /></Cell>
          <HSep />
          <Cell><PadSketch /></Cell>
          <Cell><ViaSketch /></Cell>
          <Cell><TrackSketch /></Cell>
          <HSep />
          <Cell active><Layers /></Cell>
          <Cell><Tools /></Cell>
        </div>
        <div className="h-[847px] w-[1286px] border border-[#2b2b2b] bg-[#001023]">
          <Board />
        </div>
        <div className="flex w-[39px] flex-col pt-1 pr-[6px] pl-px">
          <Cell active><Arrow /></Cell>
          <Cell><LocalRats /></Cell>
          <HSep />
          <Cell><Footprint /></Cell>
          <Cell more><Route /></Cell>
          <Cell more><Tune /></Cell>
          <Cell><Via /></Cell>
          <Cell><ZoneAdd /></Cell>
          <Cell><RuleArea /></Cell>
          <HSep />
          <Cell><LineIcon /></Cell>
          <Cell><ArcIcon /></Cell>
          <Cell><RectIcon /></Cell>
          <Cell><CircleIcon /></Cell>
          <Cell><PolyIcon /></Cell>
          <Cell><ImageIcon /></Cell>
          <Cell><TextIcon /></Cell>
          <Cell><TextBox /></Cell>
          <Cell more><Dimension /></Cell>
          <Cell><DeleteIcon /></Cell>
          <HSep />
          <Cell more><GridOrigin /></Cell>
          <Cell><Measure /></Cell>
        </div>
        <Panel />
      </div>
      {/* board statistics */}
      <div className="flex h-[38px] shrink-0 pt-px pl-[13px] text-[13.330px] leading-[19px] font-bold">
        {stats.map(([k, v, w]) => (
          <div key={k} className={w}>
            <div>{k}</div>
            <div>{v}</div>
          </div>
        ))}
      </div>
      {/* status bar */}
      <div className="flex h-6 shrink-0 items-center bg-[#242424] pt-[3px] pl-[525px] text-[13.330px] font-bold tracking-[0.1px]">
        <span className="w-[83px]">Z 2,99</span>
        <span className="w-[188px]">X 149,5000  Y 42,0000</span>
        <span className="w-[301px]">dx 149,5000  dy 42,0000  dist 155,2876</span>
        <span className="w-[215px]">grid X 0,2500  Y 0,2500</span>
        <span>mm</span>
      </div>
    </div>
  );
}
